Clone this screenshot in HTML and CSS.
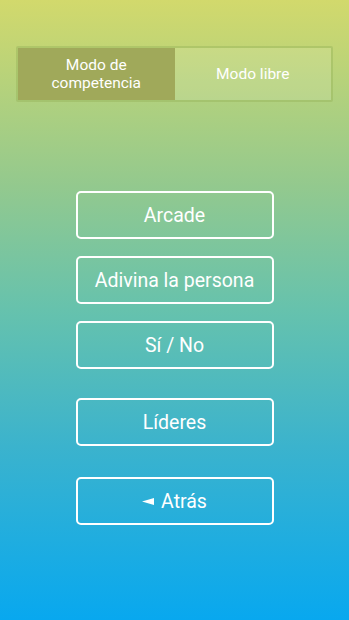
FILE: index.html
```html
<!DOCTYPE html>
<html lang="es">
<head>
<meta charset="utf-8">
<title>Modo</title>
<link rel="stylesheet" href="styles.css">
</head>
<body>
<div class="screen">
  <div class="segmented">
    <div class="seg seg-active">Modo de<br>competencia</div>
    <div class="seg">Modo libre</div>
  </div>
  <div class="menu">
    <div class="group">
      <button class="btn">Arcade</button>
      <button class="btn">Adivina la persona</button>
      <button class="btn">Sí / No</button>
    </div>
    <button class="btn btn-leaders">Líderes</button>
    <button class="btn btn-back"><svg class="arrow" width="12" height="7" viewBox="0 0 12 7"><polygon points="0,3.5 12,0 12,7" fill="#fff"/></svg>Atrás</button>
  </div>
</div>
</body>
</html>
```
FILE: styles.css
```css
html, body {
  margin: 0;
  padding: 0;
  height: 100%;
}
body {
  font-family: Roboto, "Noto Sans", sans-serif;
  color: #fff;
}
.screen {
  height: 620px;
  box-sizing: border-box;
  padding: 46px 16px 0;
  background: linear-gradient(to bottom, #d2d96c 0%, #93c98e 30%, #66c2ad 50%, #3bb3cd 72%, #08a8ef 100%);
}
.segmented {
  display: flex;
  height: 56px;
  box-sizing: border-box;
  border: 2px solid rgba(150, 180, 90, 0.45);
  border-radius: 2px;
}
.seg {
  flex: 1;
  display: flex;
  align-items: center;
  justify-content: center;
  text-align: center;
  font-size: 15.5px;
  line-height: 18px;
  background: rgba(255, 255, 255, 0.12);
}
.seg-active {
  background: #a0a95a;
}
.menu {
  width: 198px;
  margin: 89px auto 0;
  display: flex;
  flex-direction: column;
}
.group {
  display: flex;
  flex-direction: column;
  gap: 17px;
}
.btn {
  height: 48px;
  box-sizing: border-box;
  border: 2px solid #fff;
  border-radius: 5px;
  background: transparent;
  color: #fff;
  font-family: Roboto, "Noto Sans", sans-serif;
  font-size: 19.5px;
  padding: 0;
}
.btn-leaders {
  margin-top: 29px;
}
.btn-back {
  margin-top: 31px;
  display: flex;
  align-items: center;
  justify-content: center;
  gap: 7px;
}
.arrow {
  display: block;
}
```
